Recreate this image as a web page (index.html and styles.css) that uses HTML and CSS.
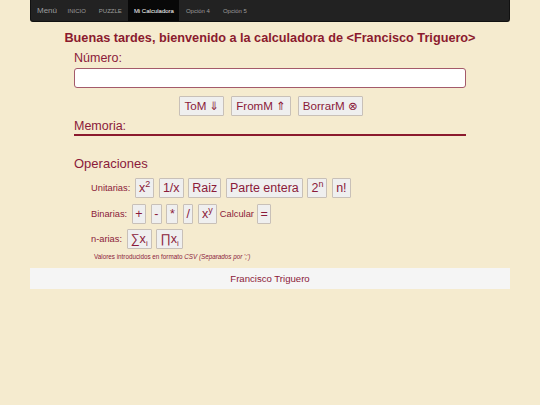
FILE: index.html
```html
<!DOCTYPE html>
<html lang="es">
<head>
<meta charset="utf-8">
<title>Mi Calculadora</title>
<link rel="stylesheet" href="styles.css">
</head>
<body>
<div class="wrap">
  <nav class="navbar">
    <span class="brand">Menú</span>
    <a class="nav-item">INICIO</a>
    <a class="nav-item">PUZZLE</a>
    <a class="nav-item active">Mi Calculadora</a>
    <a class="nav-item">Opción 4</a>
    <a class="nav-item">Opción 5</a>
  </nav>
  <h1 class="title">Buenas tardes, bienvenido a la calculadora de &lt;Francisco Triguero&gt;</h1>
  <div class="form">
    <label class="label">Número:</label>
    <input class="input" type="text">
    <div class="mem-buttons">
      <button class="btn mbtn">ToM <span class="sym">⇓</span></button>
      <button class="btn mbtn">FromM <span class="sym">⇑</span></button>
      <button class="btn mbtn">BorrarM <span class="sym">⊗</span></button>
    </div>
    <div class="label memoria">Memoria:</div>
    <h2 class="ops-title">Operaciones</h2>
    <div class="ops">
      <div class="row">
        <span class="row-label">Unitarias:</span>
        <button class="btn">x<sup>2</sup></button>
        <button class="btn">1/x</button>
        <button class="btn">Raiz</button>
        <button class="btn">Parte entera</button>
        <button class="btn">2<sup>n</sup></button>
        <button class="btn">n!</button>
      </div>
      <div class="row tight">
        <span class="row-label">Binarias:</span>
        <button class="btn sm">+</button>
        <button class="btn sm">-</button>
        <button class="btn sm">*</button>
        <button class="btn sm">/</button>
        <button class="btn">x<sup>y</sup></button>
        <span class="calc">Calcular</span>
        <button class="btn sm">=</button>
      </div>
      <div class="row">
        <span class="row-label">n-arias:</span>
        <button class="btn">∑x<sub>i</sub></button>
        <button class="btn">∏x<sub>i</sub></button>
      </div>
      <p class="note">Valores introducidos en formato <i>CSV (Separados por ';')</i></p>
    </div>
  </div>
  <footer class="footer">Francisco Triguero</footer>
</div>
</body>
</html>
```

FILE: styles.css
```css
html, body {
  margin: 0;
  padding: 0;
  background: #f5ebcf;
  font-family: "Liberation Sans", Arial, sans-serif;
  color: #8b1a3a;
}
.wrap {
  width: 480px;
  margin: 0 auto;
}
.navbar {
  display: flex;
  align-items: stretch;
  height: 22px;
  background: #222;
  border-radius: 0 0 3px 3px;
  border: 1px solid #111;
  border-top: none;
  box-sizing: border-box;
  padding-left: 6px;
}
.brand {
  color: #9d9d9d;
  font-size: 8px;
  line-height: 22px;
  padding-right: 4px;
}
.nav-item {
  color: #9d9d9d;
  font-size: 6px;
  line-height: 22px;
  padding: 0 6.5px;
}
.nav-item.active {
  background: #080808;
  color: #fff;
  padding: 0 5.5px;
}
.title {
  font-size: 12.7px;
  font-weight: bold;
  text-align: center;
  margin: 8px 0 0;
  line-height: 16px;
  color: #8b1a2e;
}
.form {
  width: 392px;
  margin: 0 auto;
}
.label {
  display: block;
  font-size: 12.5px;
  line-height: 15px;
  margin-top: 5px;
}
.input {
  display: block;
  width: 392px;
  height: 20px;
  box-sizing: border-box;
  margin-top: 2px;
  border: 1px solid #a45a6a;
  border-radius: 3px;
  background: #fff;
}
.mem-buttons {
  display: flex;
  justify-content: center;
  gap: 7px;
  margin-top: 8px;
  padding-left: 2px;
}
.btn {
  font-family: "Liberation Sans", Arial, sans-serif;
  color: #8b1a3a;
  background: #efefef;
  border: 1px solid #c8c0b8;
  border-radius: 1px;
  padding: 0 3px;
  height: 20px;
  font-size: 12.5px;
  line-height: 18px;
  margin: 0;
}
.btn.sm {
  padding: 0 2.5px;
}
.mbtn {
  height: 20px;
  font-size: 11.6px;
  padding: 0 4px;
}
.sym {
  font-family: "DejaVu Sans", sans-serif;
  font-size: 11.5px;
  color: #8b1a3a;
}
.memoria {
  margin-top: 3px;
  padding-bottom: 0;
  border-bottom: 2px solid #8b1a2e;
}
.ops-title {
  font-size: 13px;
  font-weight: normal;
  margin: 20px 0 0;
  line-height: 15px;
}
.ops {
  padding-left: 17px;
}
.row {
  display: flex;
  align-items: center;
  gap: 4.7px;
  margin-top: 7px;
}
.row + .row {
  margin-top: 5.5px;
}
.row.tight {
  gap: 4.6px;
}
.row-label {
  font-size: 9.3px;
}
.calc {
  font-size: 9.3px;
  margin: 0 -1.5px;
}
sup {
  font-size: 9px;
  line-height: 0;
  vertical-align: 5px;
}
sub {
  font-size: 8px;
  line-height: 0;
  vertical-align: -3px;
}
.note {
  font-size: 6.3px;
  margin: 4px 0 0 3px;
}
.footer {
  margin-top: 8px;
  background: #f5f5f5;
  text-align: center;
  font-size: 9.6px;
  line-height: 21px;
  color: #8b1a3a;
}
```
